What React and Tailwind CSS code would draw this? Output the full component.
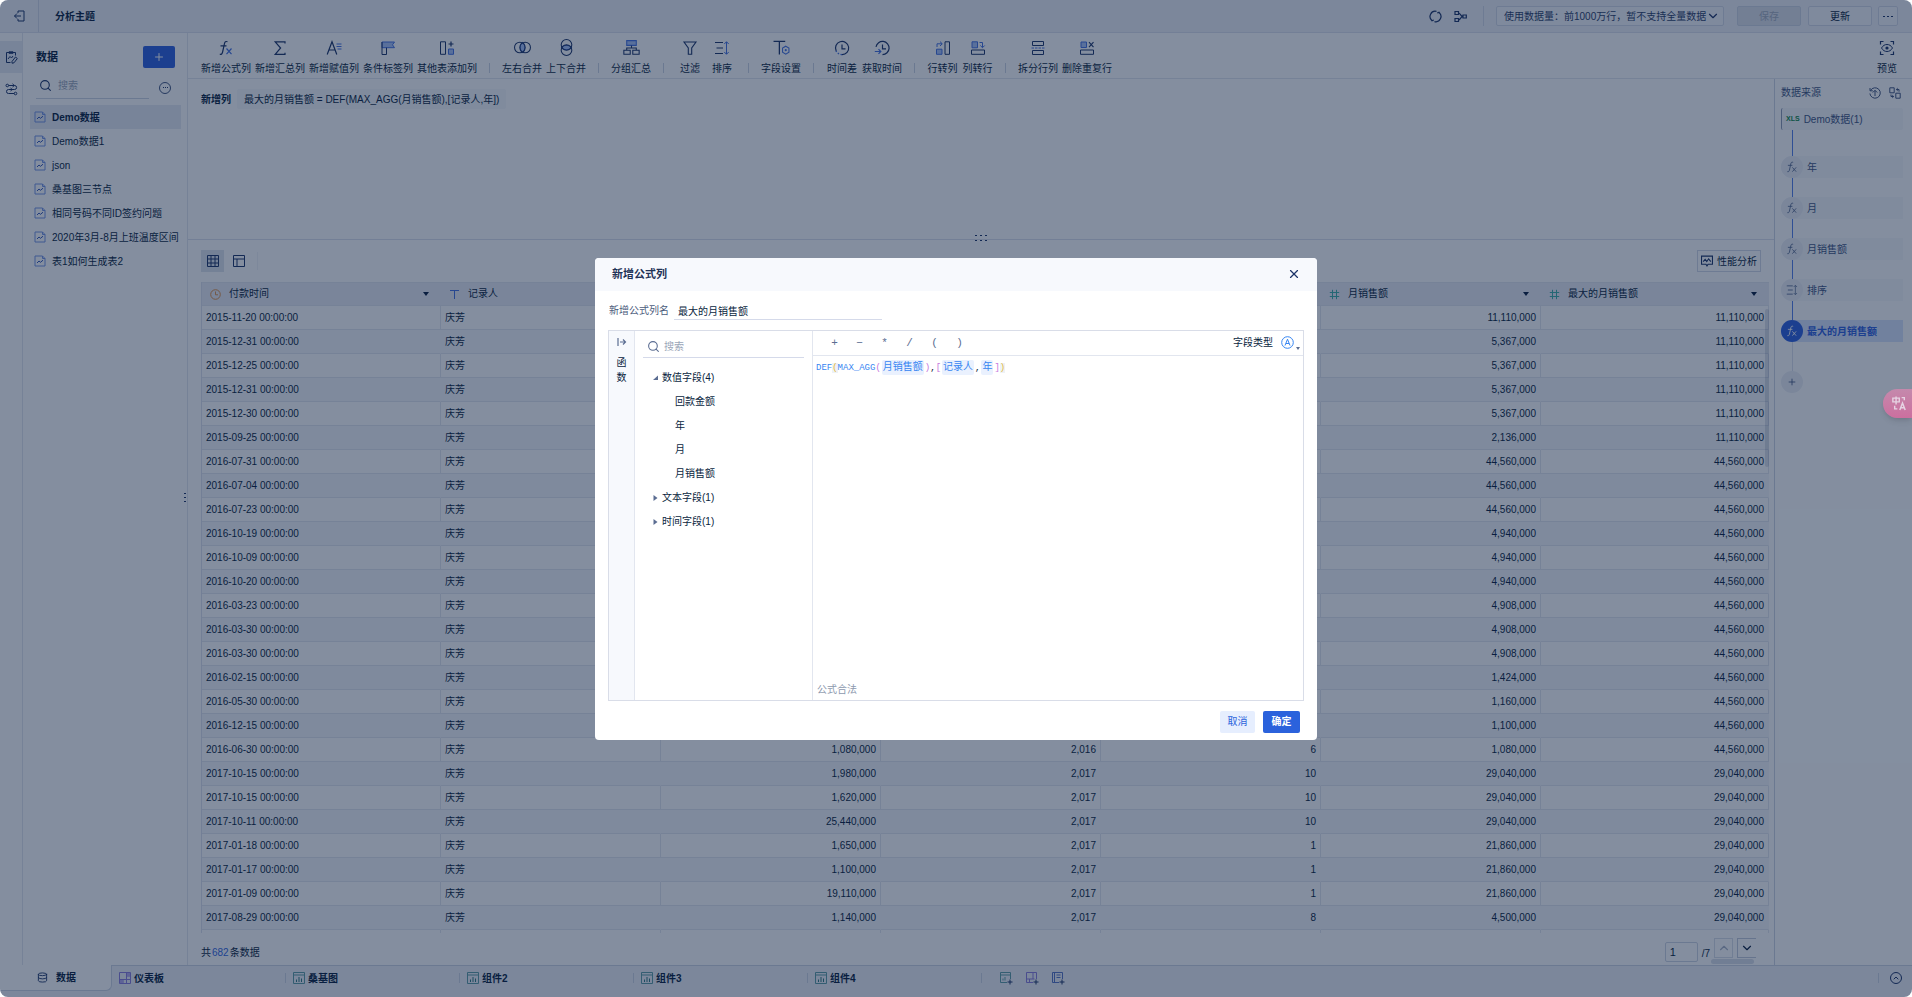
import React from 'react';
import { ChevronDown, ChevronUp, Database, Plus, Search, X } from 'lucide-react';

const INK = '#1c3468';
const BLUE = '#4471e0';
const SOFT = '#a9c2f7';

/* ---------- icons ---------- */

const Svg = ({ size = 16, box = 16, color = INK, className = '', children }) => (
    <svg
        width={size}
        height={size}
        viewBox={`0 0 ${box} ${box}`}
        fill="none"
        stroke={color}
        strokeWidth="1"
        className={`shrink-0 ${className}`}
        aria-hidden="true"
    >
        {children}
    </svg>
);

const FxIcon = ({ size = 16, color = INK, accent = BLUE }) => (
    <Svg size={size} color={color}>
        <path d="M9.500 1.800C7.600 1 6.800 2 6.400 3.800L4.600 12c-.4 1.800-1.200 2.600-2.800 2.200M2.500 5.800h6" strokeWidth="1.200" />
        <path d="M8.500 8.500l5 5.700M13.500 8.500l-5 5.700" stroke={accent} strokeWidth="1.200" />
    </Svg>
);

const SumIcon = () => (
    <Svg><path d="M13 3.500V1.800H3.200L8.600 8l-5.400 6.300H13v-1.600" strokeWidth="1.200" /></Svg>
);

const AssignIcon = () => (
    <Svg>
        <path d="M1.200 14.500L6 1.800l4.800 12.700M3 10h6" strokeWidth="1.200" />
        <path d="M10.500 4h5M10.500 6.500h5M11.500 9h4" stroke={BLUE} />
    </Svg>
);

const FlagIcon = () => (
    <Svg>
        <path d="M2 2h12.500l-2 2.800 2 2.900H2z" fill={SOFT} stroke={BLUE} />
        <path d="M2 2v12.500h4.500V7.700" />
    </Svg>
);

const AddColumnIcon = () => (
    <Svg>
        <path d="M1.500 1.800h5v12.500h-5z" />
        <path d="M12 1.500v5M9.500 4h5" strokeWidth="1.200" />
        <path d="M9.500 9h5v5.300h-5z" fill={SOFT} stroke={BLUE} />
    </Svg>
);

const JoinIcon = () => (
    <Svg size={17}>
        <path d="M8 3.200c1.400 1.100 2.200 2.800 2.200 4.800S9.400 11.700 8 12.800C6.600 11.700 5.800 10 5.800 8S6.600 4.300 8 3.200z" fill={SOFT} stroke={BLUE} />
        <circle cx="5.500" cy="8" r="5" />
        <circle cx="10.500" cy="8" r="5" />
    </Svg>
);

const UnionIcon = () => (
    <Svg size={17}>
        <path d="M3.200 8c1.100-1.400 2.800-2.200 4.800-2.200s3.700.8 4.800 2.200c-1.100 1.400-2.800 2.200-4.800 2.200S4.300 9.400 3.200 8z" fill={SOFT} stroke={BLUE} />
        <circle cx="8" cy="5.500" r="5" />
        <circle cx="8" cy="10.500" r="5" />
    </Svg>
);

const GroupIcon = () => (
    <Svg size={17}>
        <path d="M3.500 1.500h9v4.500h-9z" fill={SOFT} stroke={BLUE} />
        <path d="M8 6v2.500M3.500 10.500v-2h9v2M.8 10.500h6v3.800h-6zM9.200 10.500h6v3.800h-6z" />
    </Svg>
);

const FilterIcon = () => (
    <Svg><path d="M2 2h12L9.700 8v6.200H6.300V8z" strokeWidth="1.100" /></Svg>
);

const SortIcon = ({ size = 16, color = INK, accent = BLUE }) => (
    <Svg size={size} color={color}>
        <path d="M1 2.500h8M2.500 8H9M1 13.500h8" strokeWidth="1.200" />
        <path d="M12.500 2v12M10.300 4l2.200-2.300L14.700 4M10.300 12l2.200 2.300 2.200-2.300" stroke={accent} />
    </Svg>
);

const FieldIcon = () => (
    <Svg size={17}>
        <path d="M.5 2.200h11M6 2.200v12.300" strokeWidth="1.200" />
        <path d="M12 6.800l3 1.800v3.800l-3 1.800-3-1.800V8.600z" stroke={BLUE} />
        <circle cx="12" cy="10.500" r="1" fill={BLUE} stroke="none" />
    </Svg>
);

const TimeDiffIcon = () => (
    <Svg>
        <path d="M2.200 11A6.600 6.600 0 1 1 8 14.600" strokeWidth="1.200" />
        <path d="M8 14.600A6.600 6.600 0 0 1 2 10.800" stroke={BLUE} strokeWidth="1.300" strokeDasharray="1.500 1.500" />
        <path d="M8 4.500v4.300h3.500" strokeWidth="1.200" />
    </Svg>
);

const GetTimeIcon = () => (
    <Svg>
        <path d="M2 6.800A6.600 6.600 0 1 1 8.500 14.600" strokeWidth="1.200" />
        <path d="M8.500 4.500v4.300H12" strokeWidth="1.200" />
        <path d="M.8 11.500h6M4.500 9.200l2.300 2.300-2.300 2.300" stroke={BLUE} strokeWidth="1.200" />
    </Svg>
);

const RowToColIcon = () => (
    <Svg>
        <path d="M10 1.800h4.500v12.500H10z" />
        <path d="M1.500 9.200h5.500v5.100H1.500z" fill={SOFT} stroke={BLUE} />
        <path d="M2 7V3.800h5M5 1.600l2.300 2.200L5 6" stroke={BLUE} />
    </Svg>
);

const ColToRowIcon = () => (
    <Svg>
        <path d="M1.500 10h13v4.300h-13z" />
        <path d="M2 1.800h5.500v6H2z" fill={SOFT} stroke={BLUE} />
        <path d="M9.500 2.500h3v5M10.300 5.500l2.200 2.200 2.200-2.200" stroke={BLUE} />
    </Svg>
);

const SplitIcon = () => (
    <Svg>
        <path d="M2.500 1.500v4h11v-4zM2.500 14.500v-4h11v4z" />
        <path d="M1.500 8h13" stroke={BLUE} strokeDasharray="2.500 1" />
    </Svg>
);

const DedupeIcon = () => (
    <Svg>
        <path d="M1.500 10h13v4.300h-13z" />
        <path d="M2 2h5.500v5.500H2z" fill={SOFT} stroke={BLUE} />
        <path d="M10 2.200l4.500 5M14.500 2.200l-4.500 5" strokeWidth="1.100" />
    </Svg>
);

const PreviewIcon = () => (
    <Svg>
        <path d="M1.500 4.500v-3h3M11.500 1.500h3v3M14.500 11.500v3h-3M4.500 14.500h-3v-3" strokeWidth="1.200" />
        <path d="M2.500 8C4 5.500 5.800 4.500 8 4.500S12 5.500 13.500 8c-1.500 2.500-3.300 3.500-5.500 3.500S4 10.500 2.500 8z" />
        <circle cx="8" cy="8" r="1.600" fill={INK} stroke="none" />
    </Svg>
);

const ExitIcon = () => (
    <Svg size={12} box={12}>
        <path d="M5 3V1h6v10H5V9M8 6H1.500M4 3.500L1.500 6 4 8.500" />
    </Svg>
);

const EditDataIcon = () => (
    <Svg size={13} box={13}>
        <path d="M5.500 11.500h-4v-10h9v3M4 .8h4v1.500H4zM3 8l2-2.500 1.500 1.500L8 5" />
        <path d="M7 10.500l3.500-4.500 1.800 1.500-3.300 4.300-2 .4z" />
    </Svg>
);

const RelationIcon = () => (
    <Svg size={13} box={13}>
        <circle cx="2.300" cy="2.500" r="1.300" />
        <circle cx="10.500" cy="10.500" r="1.300" />
        <path d="M3.600 2.500h6a1.800 1.800 0 0 1 0 4H3.500a2 2 0 0 0 0 4h5.700M7.500.8l1.800 1.700L7.500 4M5.500 5l1.800 1.500L5.500 8" />
    </Svg>
);

const FileIcon = () => (
    <Svg size={12} box={12} color="#7494e2">
        <path d="M1 1h7.500L11 3.500V11H1z" />
        <path d="M8.500 1v2.500H11" />
        <path d="M3 8l2-2 1.500 1.300L9 5.200" stroke="#3457b8" />
    </Svg>
);

const GridIcon = () => (
    <Svg size={12} box={12}><path d="M.5.500h11v11H.5zM.5 4h11M.5 8h11M4 .5v11M8 .5v11" /></Svg>
);

const LayoutIcon = () => (
    <Svg size={12} box={12}><path d="M.5.500h11v11H.5zM.5 4h11M4 4v7.500" /></Svg>
);

const MonitorIcon = () => (
    <Svg size={12} box={11}><path d="M.5 1h10v7.500H6.500L5.500 10 4.500 8.500h-4zM2 6l1.800-2 1.500 2L7 3.500 9 6" /></Svg>
);

const ClockIcon = () => (
    <Svg size={11} box={11} color="#e0934a">
        <circle cx="5.500" cy="5.500" r="4.800" />
        <path d="M5.500 2.500v3.300H8" />
    </Svg>
);

const TextTypeIcon = () => (
    <Svg size={11} box={11} color={BLUE}><path d="M1 1.500h9M5.500 1.500V10" /></Svg>
);

const NumberTypeIcon = () => (
    <Svg size={11} box={11} color="#3fb0a8"><path d="M3.500.8v9.400M7.500.8v9.400M.8 3.500h9.400M.8 7.500h9.400" /></Svg>
);

const RefreshIcon = () => (
    <Svg size={13} box={13}>
        <path d="M3 10.500A5.200 5.200 0 0 1 7.500 1.400M10 2.500a5.200 5.200 0 0 1-4.500 9.100M1.800 9.200l1.200 1.600 1.800-.8M11.200 3.800L10 2.200l-1.800.8" strokeWidth="1.200" />
    </Svg>
);

const BranchIcon = () => (
    <Svg size={13} box={13}>
        <path d="M1 1.500h3.500v3H1zM1 8.500h3.500v3H1zM9 5h3.300v3H9zM4.500 3c2 0 2 3.500 4.500 3.500C6.500 6.500 6.500 10 4.500 10" strokeWidth="1.200" />
    </Svg>
);

const RestoreIcon = () => (
    <Svg size={12} box={12} color="#41557f">
        <path d="M1.500 3.500a5.200 5.200 0 1 1-.6 3M1 1v2.800h2.800M6 9V3.500M3.800 5.500L6 3.300l2.200 2.200" />
    </Svg>
);

const SwapIcon = () => (
    <Svg size={12} box={12} color="#41557f">
        <path d="M.8.8h4.400v5H.8zM6.800 6.200h4.400v5H6.800zM7.500 2.500H10v2.200M8.700 1.200L7.300 2.500l1.400 1.300M4.500 9.500H2V7.500M3.300 10.800l1.400-1.300-1.400-1.300" />
    </Svg>
);

const DashboardIcon = () => (
    <Svg size={12} box={12} color="#8b7ddd">
        <path d="M.5.500h11v11H.5zM.5 7.500h11M7.500.500v11M7.500 4h4M4 7.500v4" />
        <path d="M1 8h3v3H1zM8 1h3v3H8z" fill="#b3a9ee" stroke="none" />
    </Svg>
);

const ChartIcon = () => (
    <Svg size={12} box={12} color="#5c9ca5">
        <path d="M.5.500h11v11H.5zM.5 3h11" />
        <path d="M3.500 10V7.500M6 10V5M8.500 10V6.500" stroke="#2e7a80" />
    </Svg>
);

const AddSheetIcon = ({ color, children }) => (
    <Svg size={14} box={14} color={color}>
        <path d="M8 11.500H1.500v-10h10V8" />
        {children}
        <path d="M11 8.500v5M8.500 11h5" stroke={INK} />
    </Svg>
);

const TranslateIcon = () => (
    <Svg size={15} box={14} color="#e6d3e3">
        <path d="M.8 2h6v3.500h-6zM3.800.5v7.500M9 1.500h2.500v2.500M2.500 9v3H5" strokeWidth="1.300" />
        <path d="M7.300 13l2.500-6.500L12.300 13M8.300 11h3" strokeWidth="1.400" />
    </Svg>
);

/* ---------- data ---------- */

const toolGroups = [
    [
        { label: '新增公式列', icon: FxIcon, width: 'w-[54px]' },
        { label: '新增汇总列', icon: SumIcon, width: 'w-[54px]' },
        { label: '新增赋值列', icon: AssignIcon, width: 'w-[54px]' },
        { label: '条件标签列', icon: FlagIcon, width: 'w-[54px]' },
        { label: '其他表添加列', icon: AddColumnIcon, width: 'w-16' }
    ],
    [
        { label: '左右合并', icon: JoinIcon, width: 'w-11' },
        { label: '上下合并', icon: UnionIcon, width: 'w-11' }
    ],
    [{ label: '分组汇总', icon: GroupIcon, width: 'w-11' }],
    [
        { label: '过滤', icon: FilterIcon, width: 'w-8' },
        { label: '排序', icon: SortIcon, width: 'w-8' }
    ],
    [{ label: '字段设置', icon: FieldIcon, width: 'w-11' }],
    [
        { label: '时间差', icon: TimeDiffIcon, width: 'w-9' },
        { label: '获取时间', icon: GetTimeIcon, width: 'w-11' }
    ],
    [
        { label: '行转列', icon: RowToColIcon, width: 'w-[35px]' },
        { label: '列转行', icon: ColToRowIcon, width: 'w-[35px]' }
    ],
    [
        { label: '拆分行列', icon: SplitIcon, width: 'w-11' },
        { label: '删除重复行', icon: DedupeIcon, width: 'w-[54px]' }
    ]
];

const datasets = ['Demo数据', 'Demo数据1', 'json', '桑基图三节点', '相同号码不同ID签约问题', '2020年3月-8月上班温度区间', '表1如何生成表2'];

const columns = [
    { name: '付款时间', icon: ClockIcon, width: 'w-[239px]' },
    { name: '记录人', icon: TextTypeIcon, width: 'w-[220px]' },
    { name: '回款金额', icon: NumberTypeIcon, width: 'w-[220px]' },
    { name: '年', icon: NumberTypeIcon, width: 'w-[220px]' },
    { name: '月', icon: NumberTypeIcon, width: 'w-[220px]' },
    { name: '月销售额', icon: NumberTypeIcon, width: 'w-[220px]' },
    { name: '最大的月销售额', icon: NumberTypeIcon, width: '' }
];

// date, amount, month total, yearly max of the month totals
const rows = [
    ['2015-11-20', null, 11110000, 11110000],
    ['2015-12-31', null, 5367000, 11110000],
    ['2015-12-25', null, 5367000, 11110000],
    ['2015-12-31', null, 5367000, 11110000],
    ['2015-12-30', null, 5367000, 11110000],
    ['2015-09-25', null, 2136000, 11110000],
    ['2016-07-31', null, 44560000, 44560000],
    ['2016-07-04', null, 44560000, 44560000],
    ['2016-07-23', null, 44560000, 44560000],
    ['2016-10-19', null, 4940000, 44560000],
    ['2016-10-09', null, 4940000, 44560000],
    ['2016-10-20', null, 4940000, 44560000],
    ['2016-03-23', null, 4908000, 44560000],
    ['2016-03-30', null, 4908000, 44560000],
    ['2016-03-30', null, 4908000, 44560000],
    ['2016-02-15', null, 1424000, 44560000],
    ['2016-05-30', null, 1160000, 44560000],
    ['2016-12-15', null, 1100000, 44560000],
    ['2016-06-30', 1080000, 1080000, 44560000],
    ['2017-10-15', 1980000, 29040000, 29040000],
    ['2017-10-15', 1620000, 29040000, 29040000],
    ['2017-10-11', 25440000, 29040000, 29040000],
    ['2017-01-18', 1650000, 21860000, 29040000],
    ['2017-01-17', 1100000, 21860000, 29040000],
    ['2017-01-09', 19110000, 21860000, 29040000],
    ['2017-08-29', 1140000, 4500000, 29040000]
];

const steps = [
    { label: '年', icon: FxIcon },
    { label: '月', icon: FxIcon },
    { label: '月销售额', icon: FxIcon },
    { label: '排序', icon: SortIcon },
    { label: '最大的月销售额', icon: FxIcon, active: true }
];

const sheets = [
    { name: '仪表板', icon: DashboardIcon },
    { name: '桑基图', icon: ChartIcon },
    { name: '组件2', icon: ChartIcon },
    { name: '组件3', icon: ChartIcon },
    { name: '组件4', icon: ChartIcon }
];

const format = (n) => (n === null ? '' : n.toLocaleString('en-US'));

/* ---------- page parts ---------- */

const TopBar = () => (
    <header className="flex h-[33px] shrink-0 items-center border-b border-[#dce1ec] bg-[#eef0f6] pr-[14px]">
        <button aria-label="退出" className="flex h-full w-[39px] items-center justify-center border-r border-[#d3d9e6]">
            <ExitIcon />
        </button>
        <h1 className="pl-4 text-[10px] font-bold">分析主题</h1>
        <div className="ml-auto flex items-center">
            <button aria-label="刷新" className="mr-3"><RefreshIcon /></button>
            <button aria-label="血缘"><BranchIcon /></button>
            <span className="mr-3 ml-4 h-5 w-px bg-[#d3d9e6]" />
            <div className="relative flex items-center pr-[13px]">
                <select
                    aria-label="使用数据量"
                    className="h-5 w-[228px] appearance-none rounded-xs border border-[#d3d9e6] bg-[#f5f6fa] pl-[7px] text-[10px] text-[#2c4068]"
                >
                    <option>使用数据量：前1000万行，暂不支持全量数据</option>
                </select>
                <ChevronDown size={14} color={INK} className="pointer-events-none absolute right-[17px]" />
            </div>
            <button disabled className="mr-[7px] h-5 w-16 rounded-xs border border-[#cdd4e2] bg-[#dce0e9] text-[10px] text-[#a3acbd]">保存</button>
            <button className="mr-1.5 h-5 w-16 rounded-xs border border-[#d3d9e6] bg-[#f5f6fa] text-[10px]">更新</button>
            <button aria-label="更多" className="flex h-5 w-5 items-center justify-center gap-[2px] rounded-xs border border-[#d3d9e6] bg-[#f5f6fa]">
                <span className="h-px w-[2px] bg-[#1c3468]" />
                <span className="h-px w-[2px] bg-[#1c3468]" />
                <span className="h-px w-[2px] bg-[#1c3468]" />
            </button>
        </div>
    </header>
);

const Rail = () => (
    <nav className="w-[23px] shrink-0 border-r border-[#e2e6ef] pt-2">
        <button aria-label="数据编辑" className="flex h-8 w-full items-center justify-center bg-[#e6eaf2]"><EditDataIcon /></button>
        <button aria-label="关系视图" className="flex h-8 w-full items-center justify-center"><RelationIcon /></button>
    </nav>
);

const Sidebar = () => (
    <aside className="relative w-[165px] shrink-0 border-r border-[#e2e6ef] pt-[13px]">
        <div className="flex h-[22px] items-center justify-between pr-3 pl-[13px]">
            <h2 className="text-[11px] font-bold">数据</h2>
            <button aria-label="新增数据" className="flex h-[22px] w-8 items-center justify-center rounded-xs bg-[#2f60de]">
                <Plus size={12} color="#ffffff" strokeWidth={2} />
            </button>
        </div>
        <div className="mt-2 flex items-center pr-4 pl-[13px]">
            <div className="flex h-[23px] w-[113px] items-center border-b border-[#cdd4e2] pb-1 pl-[3px]">
                <Search size={13} color={INK} strokeWidth={2} />
                <input aria-label="搜索数据" placeholder="搜索" className="ml-1.5 w-20 text-[10px] outline-none placeholder:text-[#9aa5b8]" />
            </div>
            <button aria-label="更多" className="ml-auto flex h-3 w-3 items-center justify-center gap-px rounded-full border border-[#41557f]">
                {[0, 1, 2].map((n) => <span key={n} className="h-px w-px bg-[#1c3468]" />)}
            </button>
        </div>
        <ul className="mt-1.5 pr-1.5 pl-[7px]">
            {datasets.map((name, i) => (
                <li key={name}>
                    <button className={`flex h-6 w-full items-center gap-1.5 pl-1 text-left text-[10px] whitespace-nowrap ${i === 0 ? 'bg-[#e6eaf2] font-bold' : ''}`}>
                        <FileIcon />
                        {name}
                    </button>
                </li>
            ))}
        </ul>
        <div className="absolute top-[460px] right-[1px] grid gap-[3px]">
            {[0, 1, 2].map((n) => <span key={n} className="h-px w-[2px] bg-[#1c3468]" />)}
        </div>
    </aside>
);

const Toolbar = () => (
    <div className="flex h-[46px] shrink-0 items-start border-b border-[#e2e6ef] pt-1.5 pr-[9px] pl-[11px]">
        {toolGroups.map((group, g) => (
            <React.Fragment key={g}>
                {g > 0 && <span className="mx-[10px] mt-6 h-[10px] w-px shrink-0 bg-[#cdd4e2]" />}
                {group.map(({ label, icon: Icon, width }) => (
                    <button key={label} className={`flex shrink-0 flex-col items-center gap-[5px] text-[10px] leading-4 whitespace-nowrap ${width}`}>
                        <span className="flex h-[17px] items-center"><Icon /></span>
                        {label}
                    </button>
                ))}
            </React.Fragment>
        ))}
        <button className="ml-auto flex w-8 flex-col items-center gap-[5px] text-[10px] leading-4">
            <span className="flex h-[17px] items-center"><PreviewIcon /></span>
            预览
        </button>
    </div>
);

const FormulaSummary = () => (
    <div className="relative h-[161px] shrink-0 border-b border-[#dce1ec] pt-[10px] pl-[13px]">
        <div className="flex items-center gap-1.5 text-[10px]">
            <span className="font-bold">新增列</span>
            <span className="flex h-5 items-center rounded-xs bg-[#f6f8fb] px-[7px]">最大的月销售额 = DEF(MAX_AGG(月销售额),[记录人,年])</span>
        </div>
        <div className="absolute -bottom-[2px] left-1/2 grid -translate-x-1/2 grid-cols-3 gap-x-[3px] gap-y-1">
            {[0, 1, 2, 3, 4, 5].map((n) => <span key={n} className="h-px w-[2px] bg-[#1c3468]" />)}
        </div>
    </div>
);

const DataTable = () => (
    <div className="relative min-h-0 flex-1 overflow-hidden">
        <table className="w-full table-fixed border-separate border-spacing-0 border-l border-[#dce1ec] text-[10px] leading-4">
            <thead>
                <tr>
                    {columns.map(({ name, icon: Icon, width }) => (
                        <th key={name} className={`h-6 border-t border-b border-[#e2e6ef] bg-[#eaedf5] p-0 font-normal ${width}`}>
                            <div className="flex items-center pr-3 pl-2">
                                <Icon />
                                <span className="ml-2">{name}</span>
                                <svg width="6" height="4" viewBox="0 0 6 4" className="ml-auto" aria-hidden="true"><path d="M0 0h6L3 4z" fill="#091e40" /></svg>
                            </div>
                        </th>
                    ))}
                </tr>
            </thead>
            <tbody>
                {rows.map(([date, amount, monthTotal, yearMax], i) => {
                    const [year, month] = date.split('-').map(Number);
                    const cell = i % 2
                        ? 'h-6 border-r border-b border-r-[#f5f7fa] border-b-[#e2e6ef] bg-[#f5f7fa] px-1 py-0'
                        : 'h-6 border-r border-b border-[#e2e6ef] px-1 py-0';
                    return (
                        <tr key={i}>
                            <td className={cell}>{date} 00:00:00</td>
                            <td className={cell}>庆芳</td>
                            {[amount, year, month, monthTotal, yearMax].map((value, c) => (
                                <td key={c} className={`${cell} text-right`}>{format(value)}</td>
                            ))}
                        </tr>
                    );
                })}
                <tr>
                    {columns.map(({ name }) => <td key={name} className="h-6 border-r border-[#e2e6ef] p-0" />)}
                </tr>
            </tbody>
        </table>
        <div className="absolute top-[27px] right-0 h-[158px] w-1 rounded-full bg-[#1c3468]/15" />
    </div>
);

const DataSection = () => (
    <section className="flex min-h-0 flex-1 flex-col pt-[10px] pr-[5px] pl-[13px]">
        <div className="mb-[10px] flex h-[22px] shrink-0 items-center pr-2">
            <button aria-label="表格视图" className="flex h-[22px] w-[23px] items-center justify-center bg-[#dfe4ec]"><GridIcon /></button>
            <button aria-label="结构视图" className="ml-[3px] flex h-[22px] w-[23px] items-center justify-center"><LayoutIcon /></button>
            <span className="ml-[7px] h-[18px] w-px bg-[#f0f2f6]" />
            <button className="ml-auto flex h-[22px] w-16 items-center justify-center gap-1 border border-[#d3d9e6] text-[10px] whitespace-nowrap">
                <MonitorIcon />
                性能分析
            </button>
        </div>
        <DataTable />
        <div className="flex h-8 shrink-0 items-start justify-between pr-[13px] text-[10px]">
            <p className="pt-3">共<span className="px-px text-[#3467e0]">682</span>条数据</p>
            <div className="relative flex items-start pt-[5px]">
                <input aria-label="页码" defaultValue="1" className="mt-1 h-5 w-[33px] rounded-xs border border-[#cdd4e2] px-1 text-[11px]" />
                <span className="mt-2 mr-1 ml-1">/7</span>
                <button aria-label="上一页" disabled className="flex h-5 w-[19px] items-center justify-center border border-[#d8dee8]">
                    <ChevronUp size={14} color="#aab4c6" className="shrink-0" />
                </button>
                <button aria-label="下一页" className="ml-1 flex h-5 w-[19px] items-center justify-center border border-r-0 border-[#c3cbdb]">
                    <ChevronDown size={14} color="#091e40" className="shrink-0" />
                </button>
                <div className="absolute -bottom-[2px] right-0.5 h-[5px] w-[43px] rounded-full bg-[#d8dee8]" />
            </div>
        </div>
    </section>
);

const StepsPanel = () => (
    <aside className="w-[138px] shrink-0 border-l border-[#cdd4e2] pr-[9px] pl-1.5 text-[10px] text-[#41557f]">
        <div className="flex h-[27px] items-center gap-2 pr-[2px]">
            <h2 className="mr-auto">数据来源</h2>
            <button aria-label="恢复"><RestoreIcon /></button>
            <button aria-label="替换"><SwapIcon /></button>
        </div>
        <div className="mt-[2px] flex h-[22px] items-center rounded-xs border-l border-[#8f9bb3] bg-[#f6f8fb] pl-1">
            <span className="text-[7px] font-bold text-[#0f8a4a]">XLS</span>
            <span className="ml-1">Demo数据(1)</span>
        </div>
        {steps.map(({ label, icon: Icon, active }, i) => (
            <React.Fragment key={label}>
                <div className={`ml-[11px] w-px bg-[#5480ea] ${i === 0 ? 'h-[26px]' : 'h-[19px]'}`} />
                <button className={`flex h-[22px] w-full items-center gap-1 rounded-l-full rounded-r-xs ${active ? 'bg-[#d9e5fc] font-bold text-[#2f60de]' : 'bg-[#f6f8fb]'}`}>
                    <span className={`flex h-[22px] w-[22px] items-center justify-center rounded-full ${active ? 'bg-[#2f60de]' : 'bg-[#eceff5]'}`}>
                        <Icon size={12} color={active ? '#ffffff' : '#5b6d92'} accent={active ? '#ffffff' : '#5b6d92'} />
                    </span>
                    {label}
                </button>
            </React.Fragment>
        ))}
        <div className="ml-[11px] h-[29px] w-px bg-[#dce1ec]" />
        <button aria-label="新增步骤" className="flex h-[22px] w-[22px] items-center justify-center rounded-full bg-[#eceff5]">
            <Plus size={10} color="#41557f" />
        </button>
    </aside>
);

const SheetBar = () => (
    <footer className="flex h-8 shrink-0 items-start border-t border-[#cdd4e2] bg-[#eef0f6] pr-[10px] text-[10px] font-bold">
        <button className="-mt-px flex h-[26px] w-28 shrink-0 items-center gap-2 rounded-br-md border-r border-b border-[#cdd4e2] bg-white pl-[37px]">
            <Database size={11} color={INK} />
            数据
        </button>
        {sheets.map(({ name, icon: Icon }) => (
            <div key={name} className="flex h-6 w-[174px] shrink-0 items-center pl-[7px]">
                <button className="flex items-center gap-[3px]"><Icon />{name}</button>
                <span className="ml-auto h-[10px] w-px bg-[#cdd4e2]" />
            </div>
        ))}
        <div className="flex h-6 items-center gap-3 pl-[17px]">
            <button aria-label="新增组件"><AddSheetIcon color="#5c9ca5"><path d="M1.500 4h10M4 9.500v-2M6 9.500V6" /></AddSheetIcon></button>
            <button aria-label="新增仪表板"><AddSheetIcon color="#8b7ddd"><path d="M1.500 8h8M8 1.500V8M4.500 8v3" /></AddSheetIcon></button>
            <button aria-label="新增文档"><AddSheetIcon color="#5674c4"><path d="M3.500 1.500v10M5.500 4h4M5.500 6.500h4" /></AddSheetIcon></button>
        </div>
        <div className="ml-auto flex h-6 items-center">
            <span className="mr-[11px] h-[10px] w-px bg-[#cdd4e2]" />
            <button aria-label="展开" className="flex h-3 w-3 items-center justify-center rounded-full border border-[#1c3468]">
                <ChevronUp size={8} color={INK} strokeWidth={3} />
            </button>
        </div>
    </footer>
);

/* ---------- dialog ---------- */

const TreeRow = ({ open, children }) => (
    <button className="flex h-6 w-full items-center gap-1 pl-[18px] text-left">
        <svg width="5" height="6" viewBox="0 0 5 6" aria-hidden="true">
            <path d={open ? 'M5 0.500V5H0z' : 'M0.500 0L4.500 3 0.500 6z'} fill="#5b6d92" />
        </svg>
        {children}
    </button>
);

const Token = ({ children }) => (
    <span className="mx-px rounded-xs bg-[#eaf1fe] px-px py-0.5 text-[10px] text-[#3685f2]">{children}</span>
);

const FormulaDialog = () => (
    <div role="dialog" aria-label="新增公式列" className="w-[722px] max-w-full rounded-sm bg-white text-[10px]">
        <div className="flex h-[33px] items-center justify-between rounded-t-sm bg-[#f7f9fd] pr-4 pl-[17px]">
            <h2 className="text-[11px] font-bold text-[#1f3256]">新增公式列</h2>
            <button aria-label="关闭"><X size={14} color={INK} strokeWidth={2} /></button>
        </div>
        <div className="flex items-center px-[14px] pt-[11px]">
            <label htmlFor="column-name" className="text-[#4b5c7c]">新增公式列名</label>
            <input
                id="column-name"
                defaultValue="最大的月销售额"
                className="ml-[5px] h-[18px] w-[208px] border-b border-[#d5daea] px-1 outline-none"
            />
        </div>
        <div className="mx-[13px] mt-[10px] flex h-[371px] border border-[#d9dde8]">
            <button className="flex w-[26px] flex-col items-center border-r border-[#e2e6ef] bg-[#f7f9fd] pt-1.5 leading-[15px]">
                <Svg size={10} box={10} color="#5b6d92" className="mb-2">
                    <path d="M1 1v8M3 5h5.500M6 2.500L8.500 5 6 7.500" strokeWidth="1.200" />
                </Svg>
                <span>函</span>
                <span>数</span>
            </button>
            <div className="w-[178px] border-r border-[#e2e6ef]">
                <div className="mx-2 flex h-[27px] items-center border-b border-[#d5daea] pt-1.5 pl-1">
                    <Search size={13} color="#5b6d92" strokeWidth={2} />
                    <input aria-label="搜索字段" placeholder="搜索" className="ml-1 w-24 outline-none placeholder:text-[#9aa5b8]" />
                </div>
                <div className="pt-2">
                    <TreeRow open>数值字段(4)</TreeRow>
                    {['回款金额', '年', '月', '月销售额'].map((name) => (
                        <button key={name} className="flex h-6 w-full items-center pl-10">{name}</button>
                    ))}
                    <TreeRow>文本字段(1)</TreeRow>
                    <TreeRow>时间字段(1)</TreeRow>
                </div>
            </div>
            <div className="flex min-w-0 flex-1 flex-col">
                <div className="flex h-[25px] items-center border-b border-[#e2e6ef] pr-[3px] pl-[9px]">
                    {['+', '−', '*', '/', '(', ')'].map((op) => (
                        <button key={op} className="w-[25px] font-['Liberation_Mono',monospace] text-[11px] leading-4 text-[#5b6d92]">{op}</button>
                    ))}
                    <button className="ml-auto flex items-center gap-2">
                        字段类型
                        <Svg size={13} box={13} color="#3685f2">
                            <circle cx="6.500" cy="6.500" r="5.800" />
                            <path d="M4 9.500l2.500-6.300L9 9.500M5 7.500h3" />
                        </Svg>
                        <svg width="4" height="3" viewBox="0 0 4 3" className="-ml-1.5 self-end" aria-hidden="true"><path d="M0 0h4L2 3z" fill="#5b6d92" /></svg>
                    </button>
                </div>
                <code className="flex-1 pt-1 pl-[3px] font-['Liberation_Mono','Noto_Sans_CJK_SC',monospace] text-[9px] leading-4 text-[#3685f2]">
                    DEF<span className="bg-[#eef2f6] text-[#e5b93c]">(</span>MAX_AGG<span className="text-[#c678dd]">(</span>
                    <Token>月销售额</Token>
                    <span className="text-[#c678dd]">)</span><span className="text-[#091e40]">,</span><span className="text-[#c678dd]">[</span>
                    <Token>记录人</Token>
                    <span className="text-[#091e40]">,</span>
                    <Token>年</Token>
                    <span className="text-[#c678dd]">]</span><span className="bg-[#eef2f6] text-[#e5b93c]">)</span>
                </code>
                <p className="pb-[3px] pl-1 text-[#8d99ae]">公式合法</p>
            </div>
        </div>
        <div className="flex justify-end gap-2 pt-[10px] pr-[17px] pb-[7px]">
            <button className="h-[22px] w-[35px] rounded-xs bg-[#e6eefe] text-[#2b62dc]">取消</button>
            <button className="h-[22px] w-[37px] rounded-xs bg-[#2b62dc] font-bold text-white">确定</button>
        </div>
    </div>
);

const App = () => (
    <div className="relative flex h-screen flex-col overflow-hidden rounded-lg bg-white font-['Liberation_Sans','Noto_Sans_CJK_SC',sans-serif] text-[#091e40]">
        <TopBar />
        <div className="flex min-h-0 flex-1">
            <Rail />
            <Sidebar />
            <main className="flex min-w-0 flex-1 flex-col">
                <Toolbar />
                <div className="flex min-h-0 flex-1">
                    <div className="flex min-w-0 flex-1 flex-col">
                        <FormulaSummary />
                        <DataSection />
                    </div>
                    <StepsPanel />
                </div>
            </main>
        </div>
        <SheetBar />

        <div className="absolute inset-0 flex items-center justify-center bg-[#091e40]/50">
            <FormulaDialog />
        </div>

        {/* Floating translate handle */}
        <button
            aria-label="翻译"
            className="absolute top-[389px] right-0 flex h-[29px] w-[29px] items-center justify-center rounded-l-full bg-linear-to-b from-[#c489ac] to-[#cc6f9f] pl-1 shadow-md"
        >
            <TranslateIcon />
        </button>
    </div>
);

export default App;
